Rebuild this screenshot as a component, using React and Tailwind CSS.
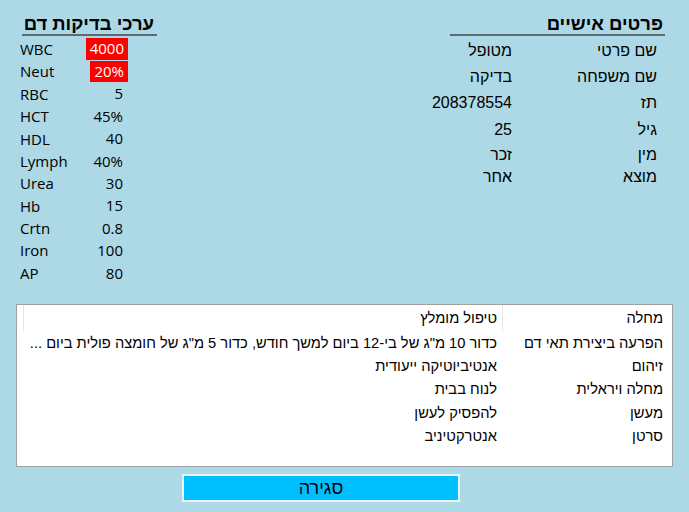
import React from 'react';

const blood = [
  ['WBC', '4000', true],
  ['Neut', '20%', true],
  ['RBC', '5'],
  ['HCT', '45%'],
  ['HDL', '40'],
  ['Lymph', '40%'],
  ['Urea', '30'],
  ['Hb', '15'],
  ['Crtn', '0.8'],
  ['Iron', '100'],
  ['AP', '80'],
];

const personal = [
  ['שם פרטי', 'מטופל', 'h-[26px]'],
  ['שם משפחה', 'בדיקה', 'h-[26px]'],
  ['תז', '208378554', 'h-[26px]'],
  ['גיל', '25', 'h-[28px]'],
  ['מין', 'זכר', 'h-[22px]'],
  ['מוצא', 'אחר', 'h-[22px]'],
];

const diseases = [
  ['הפרעה ביצירת תאי דם', 'כדור 10 מ"ג של בי-12 ביום למשך חודש, כדור 5 מ"ג של חומצה פולית ביום ...'],
  ['זיהום', 'אנטיביוטיקה ייעודית'],
  ['מחלה ויראלית', 'לנוח בבית'],
  ['מעשן', 'להפסיק לעשן'],
  ['סרטן', 'אנטרקטיניב'],
];

const heb = { fontFamily: '"Liberation Sans", "DejaVu Sans", sans-serif' };

export default function App() {
  return (
    <div
      className="w-[689px] h-[512px] bg-[#add8e6] text-black overflow-hidden"
      style={{ fontFamily: '"Open Sans", "Liberation Sans", sans-serif' }}
    >
      <div className="flex justify-between h-[304px]">
        <div className="pl-[20px] pt-[13px] w-[200px]">
          <div dir="rtl" style={heb} className="w-[135px] whitespace-nowrap border-b-2 border-[#5d6b73] text-[18.5px] font-bold leading-[21px] pr-[3px] ml-[2px]">
            ערכי בדיקות דם
          </div>
          <div className="mt-[2px]">
            {blood.map(([k, v, hi]) => (
              <div key={k} className="flex items-center h-[22.4px] text-[15px] font-medium">
                <span className="w-[63px]">{k}</span>
                <span className="w-[45px] flex justify-end">
                  <span className={hi ? 'bg-[#ff0000] text-white px-[4px] leading-[21px] h-[21.5px]' : 'pr-[5px] leading-[21px]'}>{v}</span>
                </span>
              </div>
            ))}
          </div>
        </div>
        <div dir="rtl" style={heb} className="pr-[24px] pt-[13px] w-[250px]">
          <div className="w-[215px] whitespace-nowrap border-b-2 border-[#5d6b73] text-[18.5px] font-bold leading-[21px] pr-[2px]">
            פרטים אישיים
          </div>
          <div className="mt-[2px]">
            {personal.map(([k, v, h]) => (
              <div key={k} className={`flex items-center text-[16px] ${h}`}>
                <span className="w-[153px] shrink-0 pr-[8px]">{k}</span>
                <span>{v}</span>
              </div>
            ))}
          </div>
        </div>
      </div>
      <div dir="rtl" style={heb} className="mx-[16px] h-[163px] bg-white border border-[#a0a0a0] text-[14.7px]">
        <div className="flex h-[26px] items-center">
          <span className="w-[170px] pr-[9px] h-full flex items-center border-l border-[#e5e5e5]">מחלה</span>
          <span className="pr-[5px] flex-1 h-full flex items-center border-l border-[#e5e5e5] ml-[6px]">טיפול מומלץ</span>
        </div>
        {diseases.map(([k, v]) => (
          <div key={k} className="flex h-[23.3px] items-center">
            <span className="w-[170px] pr-[9px] whitespace-nowrap">{k}</span>
            <span className="pr-[5px] whitespace-nowrap">{v}</span>
          </div>
        ))}
      </div>
      <div className="flex mt-[7px] pl-[182px]">
        <button style={heb} className="w-[278px] h-[28px] bg-[#00bfff] border-2 border-[#e8f4f8] text-[18px] leading-none">
          סגירה
        </button>
      </div>
    </div>
  );
}
